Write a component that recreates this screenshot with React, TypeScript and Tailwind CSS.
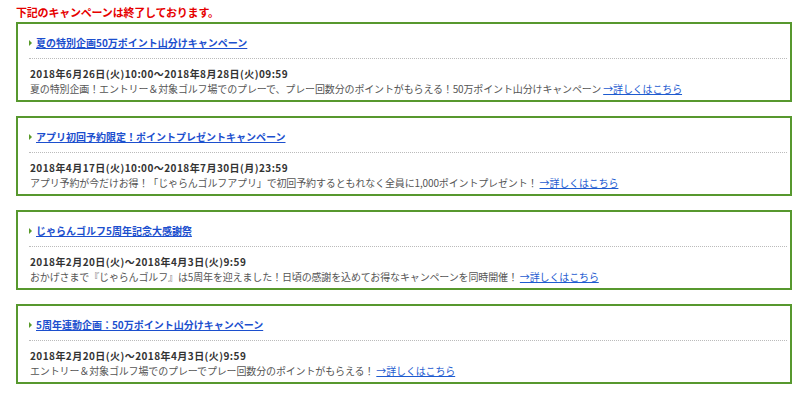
const CAMPAIGNS = [
  {
    title: '夏の特別企画50万ポイント山分けキャンペーン',
    period: '2018年6月26日(火)10:00～2018年8月28日(火)09:59',
    text: '夏の特別企画！エントリー＆対象ゴルフ場でのプレーで、プレー回数分のポイントがもらえる！50万ポイント山分けキャンペーン',
  },
  {
    title: 'アプリ初回予約限定！ポイントプレゼントキャンペーン',
    period: '2018年4月17日(火)10:00～2018年7月30日(月)23:59',
    text: 'アプリ予約が今だけお得！「じゃらんゴルフアプリ」で初回予約するともれなく全員に1,000ポイントプレゼント！',
  },
  {
    title: 'じゃらんゴルフ5周年記念大感謝祭',
    period: '2018年2月20日(火)～2018年4月3日(火)9:59',
    text: 'おかげさまで『じゃらんゴルフ』は5周年を迎えました！日頃の感謝を込めてお得なキャンペーンを同時開催！',
  },
  {
    title: '5周年連動企画：50万ポイント山分けキャンペーン',
    period: '2018年2月20日(火)～2018年4月3日(火)9:59',
    text: 'エントリー＆対象ゴルフ場でのプレーでプレー回数分のポイントがもらえる！',
  },
]

export default function App() {
  return (
    <div
      className="min-h-[395px] bg-white pl-4 pr-2"
      style={{ fontFamily: '"Noto Sans CJK JP", "Noto Sans", sans-serif' }}
    >
      <p className="pt-[5px] text-[11px] font-bold leading-[14px] tracking-[-0.2px] text-[#e60000]">
        下記のキャンペーンは終了しております。
      </p>

      <div className="mt-[3px] flex flex-col gap-[14px]">
        {CAMPAIGNS.map((c) => (
          <div key={c.title} className="border-2 border-[#57982e] pb-1 pl-[11px] pr-[3px] pt-3">
            <div className="flex items-center leading-[14px]">
              {/* small green arrow */}
              <span className="mr-[4px] h-0 w-0 border-y-[3px] border-l-[3px] border-y-transparent border-l-[#5a9a2a]" />
              <a href="#" className="text-[10px] font-bold text-[#1c4fce] underline">
                {c.title}
              </a>
            </div>
            <div className="mt-2 border-b border-dotted border-[#bbbbbb]" />
            <p className="mt-[7px] pl-px text-[10px] font-bold leading-[15px] tracking-[0.45px] text-[#333333]">
              {c.period}
            </p>
            <p className="pl-px text-[10px] leading-[15px] tracking-[-0.14px] text-[#555555]">
              {c.text}{' '}
              <a href="#" className="text-[#1d5bd0] underline">
                →詳しくはこちら
              </a>
            </p>
          </div>
        ))}
      </div>
    </div>
  )
}
